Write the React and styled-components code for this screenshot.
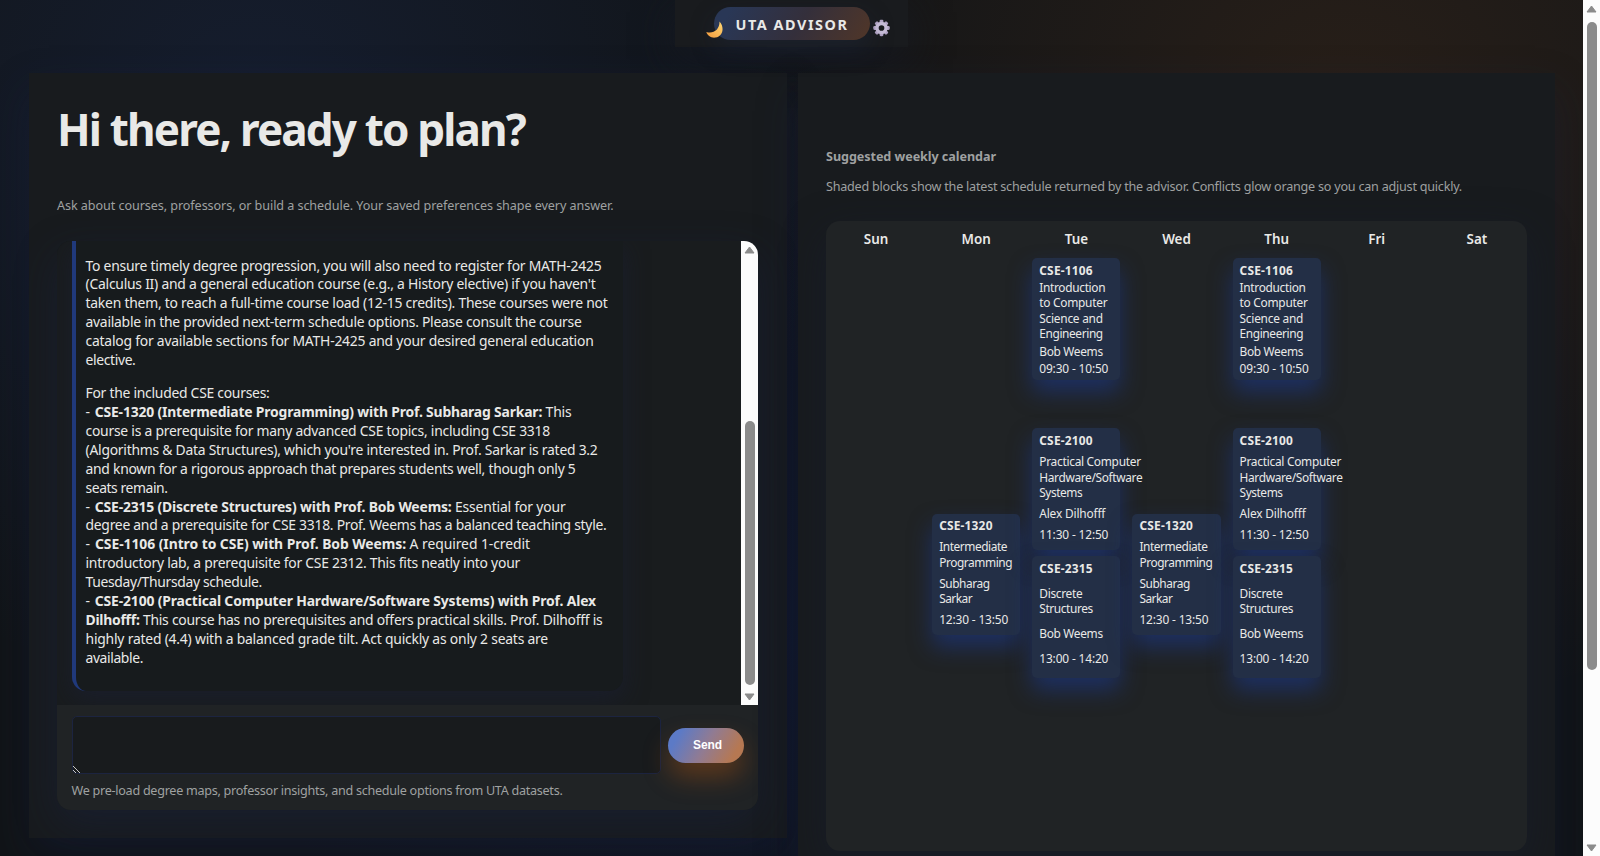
import React, { useLayoutEffect, useRef } from 'react';
import styled, { createGlobalStyle } from 'styled-components';

const GlobalStyle = createGlobalStyle`
  * {
    box-sizing: border-box;
  }
  body {
    margin: 0;
    height: 856px;
    overflow: hidden;
    color: #e9e9e7;
    font-family: 'Segoe UI', 'Noto Sans', 'Open Sans', sans-serif;
    font-size: 14px;
    background: #111417;
  }
  h1, p {
    margin: 0;
  }
`
const Page = styled.div`
    display: flex;
    height: 856px;
    overflow: hidden;
    background:
      radial-gradient(circle at 84% 14%, rgba(245, 128, 37, 0.1), transparent 40%),
      radial-gradient(circle at 16% 14%, rgba(40, 70, 150, 0.19), transparent 38%),
      radial-gradient(ellipse at 50% 75%, rgba(20, 45, 140, 0.13), transparent 50%),
      #111417;
`
const Content = styled.div`
    flex: 1;
    display: flex;
    flex-direction: column;
    align-items: center;
`
const Header = styled.header`
    flex: none;
    display: flex;
    align-items: center;
    gap: 3px;
    width: 233px;
    height: 47px;
    padding: 0 18px 0 30px;
    background: #191b1e;
    box-shadow: 0 12px 40px rgba(24, 27, 36, 0.85);
`
const Brand = styled.div`
    position: relative;
    display: flex;
    align-items: center;
    justify-content: center;
    width: 156px;
    height: 33px;
    margin: 0 0 0 9px;
    padding-top: 2px;
    flex: none;
    border-radius: 17px;
    background: linear-gradient(120deg, #293756 10%, #342f3b 55%, #503628);
    box-shadow: 0 10px 24px rgba(32, 42, 70, 0.35);
    font-size: 14.4px;
    font-weight: 700;
`
const Moon = styled.svg`
    position: absolute;
    left: -8px;
    top: 14px;
`
const Gear = styled.svg`
    margin-top: 9px;
`
const Panels = styled.main`
    flex: none;
    display: grid;
    grid-template-columns: 758px 757px;
    gap: 11px;
    margin-top: 26px;
    align-self: flex-start;
    padding-left: 29px;
`
const Panel = styled.section`
    display: flex;
    flex-direction: column;
    height: ${p => p.$height}px;
    padding: ${p => p.$pad};
    background: #181b1e;
    box-shadow: 0 18px 40px rgba(22, 33, 70, 0.3);
`
const Title = styled.h1`
    font-size: 44px;
    line-height: 60px;
    font-weight: 700;
`
const Muted = styled.p`
    font-size: 12.6px;
    line-height: 18px;
    font-weight: ${p => p.$bold ? 700 : 400};
    color: #9fa1a1;
    margin-top: ${p => p.$top || 0}px;
`
const Chat = styled.div`
    display: flex;
    flex-direction: column;
    width: 701px;
    height: 569px;
    margin-top: 26px;
    border-radius: 14px;
    overflow: hidden;
    box-shadow: 0 14px 40px rgba(24, 34, 70, 0.4);
`
const Log = styled.div`
    display: flex;
    justify-content: space-between;
    height: 464px;
    padding-left: 14.5px;
    background: #191c1e;
`
const Message = styled.div`
    width: 551px;
    height: 450px;
    padding: 15.5px 10px 0;
    border-left: 4px solid #20397b;
    border-bottom-left-radius: 14px;
    border-bottom-right-radius: 14px;
    background: #171b1d;
    box-shadow: 0 8px 24px rgba(26, 32, 54, 0.6);
`
const Paragraph = styled.p`
    font-size: 13.9px;
    line-height: 18.9px;
    margin-bottom: 14.2px;
`
const Strong = styled.strong`
    padding-left: ${p => p.$dashed ? 1.5 : 0}px;
`
const FitText = styled.span`
    display: block;
    width: max-content;
    white-space: pre;
`
const Composer = styled.div`
    height: 105px;
    padding: 11px 14px 0 14.5px;
    background: #202325;
`
const InputRow = styled.div`
    display: flex;
    align-items: center;
    gap: 7px;
`
const Input = styled.div`
    display: flex;
    align-items: flex-end;
    width: 590px;
    height: 58px;
    border: 1px solid #1c2440;
    border-radius: 5px;
    background: #181b1d;
`
const Send = styled.button`
    display: flex;
    align-items: center;
    justify-content: center;
    width: 76px;
    height: 35px;
    padding: 0 0 0 3px;
    border: 0;
    border-radius: 18px;
    color: #fff;
    font: 700 12px 'Liberation Sans', Arial, sans-serif;
    background: linear-gradient(120deg, #5c7ac6 15%, #917b92 50%, #b67852 85%);
    box-shadow: 0 14px 26px rgba(200, 95, 15, 0.36);
`
const Track = styled.div`
    flex: none;
    display: flex;
    flex-direction: column;
    align-items: center;
    width: 17px;
    height: ${p => p.$height}px;
    padding: 5px 0 4px;
    background: #fcfcfc;
`
const Thumb = styled.div`
    width: 10px;
    height: ${p => p.$height}px;
    margin: ${p => p.$top}px 0 auto;
    border-radius: 5px;
    background: #8b8b8b;
`
const Calendar = styled.div`
    display: grid;
    grid-template-columns: repeat(7, minmax(0, 1fr));
    grid-template-rows: 34px repeat(14, 42.6px);
    width: 701px;
    height: 630px;
    margin-top: 25px;
    border-radius: 14px;
    background: #202325;
    box-shadow: 0 14px 40px rgba(24, 30, 50, 0.5);
`
const Day = styled.div`
    padding-top: 9px;
    text-align: center;
    font-size: 13.4px;
    line-height: 18px;
    font-weight: 600;
`
const Course = styled.div`
    display: grid;
    gap: 1.6px;
    grid-column: ${p => p.$day};
    grid-row: ${p => p.$slot} / span 3;
    margin: 3px 6px;
    padding: 4.5px 7px 3.5px;
    border-radius: 5px;
    background: #232f46;
    box-shadow: 0 12px 22px rgba(28, 56, 140, 0.58);
    font-size: 11.9px;
    line-height: 15.6px;
`
const Code = styled.div`
    font-weight: 700;
`

// Spreads the letters of one line so that it takes the given width
const Fit = ({ w, children }) => {
  const ref = useRef(null)
  useLayoutEffect(() => {
    const el = ref.current
    el.style.letterSpacing = '0px'
    const gap = (w - el.getBoundingClientRect().width) / el.textContent.length
    el.style.letterSpacing = `${gap}px`
  }, [w])
  return <FitText ref={ref}>{children}</FitText>
}

const Scrollbar = ({ height, top, thumb }) => (
  <Track $height={height}>
    <svg width="11" height="8" viewBox="0 0 11 8"><path d="M5.5 1 10 7H1Z" fill="#8b8b8b" stroke="#8b8b8b" strokeLinejoin="round" /></svg>
    <Thumb $height={thumb} $top={top} />
    <svg width="11" height="8" viewBox="0 0 11 8"><path d="M5.5 7 10 1H1Z" fill="#8b8b8b" stroke="#8b8b8b" strokeLinejoin="round" /></svg>
  </Track>
);

const intro = [
  [516, 'To ensure timely degree progression, you will also need to register for MATH-2425'],
  [510, "(Calculus II) and a general education course (e.g., a History elective) if you haven't"],
  [522, 'taken them, to reach a full-time course load (12-15 credits). These courses were not'],
  [496, 'available in the provided next-term schedule options. Please consult the course'],
  [508, 'catalog for available sections for MATH-2425 and your desired general education'],
  [50, 'elective.'],
]
const details = [
  [184, '', 'For the included CSE courses:'],
  [486, 'CSE-1320 (Intermediate Programming) with Prof. Subharag Sarkar:', ' This', '- '],
  [464.5, '', "course is a prerequisite for many advanced CSE topics, including CSE 3318"],
  [512, '', "(Algorithms & Data Structures), which you're interested in. Prof. Sarkar is rated 3.2"],
  [490, '', 'and known for a rigorous approach that prepares students well, though only 5'],
  [82, '', 'seats remain.'],
  [480, 'CSE-2315 (Discrete Structures) with Prof. Bob Weems:', ' Essential for your', '- '],
  [521, '', 'degree and a prerequisite for CSE 3318. Prof. Weems has a balanced teaching style.'],
  [444.5, 'CSE-1106 (Intro to CSE) with Prof. Bob Weems:', ' A required 1-credit', '- '],
  [434.5, '', 'introductory lab, a prerequisite for CSE 2312. This fits neatly into your'],
  [176.5, '', 'Tuesday/Thursday schedule.'],
  [510.5, 'CSE-2100 (Practical Computer Hardware/Software Systems) with Prof. Alex', '', '- '],
  [517, 'Dilhofff:', ' This course has no prerequisites and offers practical skills. Prof. Dilhofff is'],
  [462.5, '', 'highly rated (4.4) with a balanced grade tilt. Act quickly as only 2 seats are'],
  [57.5, '', 'available.'],
]
const days = ['Sun', 'Mon', 'Tue', 'Wed', 'Thu', 'Fri', 'Sat']

const cse1106 = { code: 'CSE-1106', slot: 2, name: [['Introduction', 66], ['to Computer', 68], ['Science and', 63.5], ['Engineering', 63.5]], prof: [['Bob Weems', 63.5]], time: '09:30 - 10:50' }
const cse2100 = { code: 'CSE-2100', slot: 6, name: [['Practical Computer', 101.5], ['Hardware/Software', 103], ['Systems', 43]], prof: [['Alex Dilhofff', 66]], time: '11:30 - 12:50' }
const cse1320 = { code: 'CSE-1320', slot: 8, name: [['Intermediate', 68], ['Programming', 73]], prof: [['Subharag', 50.5], ['Sarkar', 33]], time: '12:30 - 13:50' }
const cse2315 = { code: 'CSE-2315', slot: 9, name: [['Discrete', 43], ['Structures', 53.5]], prof: [['Bob Weems', 63.5]], time: '13:00 - 14:20' }

const schedule = [
  { day: 2, ...cse1320 },
  { day: 3, ...cse1106 },
  { day: 3, ...cse2100 },
  { day: 3, ...cse2315 },
  { day: 4, ...cse1320 },
  { day: 5, ...cse1106 },
  { day: 5, ...cse2100 },
  { day: 5, ...cse2315 },
]

const CourseBlock = ({ course }) => {
  const { day, slot, code, name, prof, time } = course
  return (
    <Course $day={day} $slot={slot}>
      <Code><Fit w={53.5}>{code}</Fit></Code>
      <div>{name.map(([text, w]) => <Fit key={text} w={w}>{text}</Fit>)}</div>
      <div>{prof.map(([text, w]) => <Fit key={text} w={w}>{text}</Fit>)}</div>
      <Fit w={69}>{time}</Fit>
    </Course>
  )
}

const App = () => (
  <React.Fragment>
    <GlobalStyle />
    <Page>
      <Content>
        <Header>
          <Brand>
            <Fit w={113}>UTA ADVISOR</Fit>
            <Moon width="18" height="18" viewBox="0 0 18 18">
              <defs>
                <linearGradient id="moon" x1="0" y1="1" x2="1" y2="0">
                  <stop offset="0" stopColor="#f39a3c" />
                  <stop offset="1" stopColor="#ffd773" />
                </linearGradient>
              </defs>
              <path d="M13.5 0.5C18.5 5.5 17.5 15.5 9.5 16.6C5 17.2 1.5 14.5 0.3 11C7.5 13.3 13.8 8.5 13.5 0.5Z" fill="url(#moon)" />
            </Moon>
          </Brand>
          <Gear width="18" height="18" viewBox="0 0 18 18">
            <g fill="#b3a5c6">
              {[0, 45, 90, 135, 180, 225, 270, 315].map(a => (
                <rect key={a} x="7" y="0.3" width="4" height="4" rx="1.2" transform={`rotate(${a} 9 9)`} />
              ))}
            </g>
            <circle cx="9" cy="9" r="4.8" fill="none" stroke="#cabfda" strokeWidth="3.6" />
          </Gear>
        </Header>
        <Panels>
          <Panel $height={765} $pad="26px 28px 0">
            <Title><Fit w={468}>Hi there, ready to plan?</Fit></Title>
            <Muted $top={38}><Fit w={556.5}>Ask about courses, professors, or build a schedule. Your saved preferences shape every answer.</Fit></Muted>
            <Chat>
              <Log>
                <Message>
                  <Paragraph>
                    {intro.map(([w, text]) => <Fit key={text} w={w}>{text}</Fit>)}
                  </Paragraph>
                  <Paragraph>
                    {details.map(([w, strong, text, dash]) => (
                      <Fit key={strong + text} w={w}>{dash}{strong && <Strong $dashed={!!dash}>{strong}</Strong>}{text}</Fit>
                    ))}
                  </Paragraph>
                </Message>
                <Scrollbar height={464} top={167} thumb={264} />
              </Log>
              <Composer>
                <InputRow>
                  <Input>
                    <svg width="8" height="8" viewBox="0 0 8 8"><path d="M0 1 7 8M0 5 3 8" stroke="#c8c8c8" /></svg>
                  </Input>
                  <Send><Fit w={29}>Send</Fit></Send>
                </InputRow>
                <Muted $top={8}><Fit w={491}>We pre-load degree maps, professor insights, and schedule options from UTA datasets.</Fit></Muted>
              </Composer>
            </Chat>
          </Panel>
          <Panel $height={820} $pad="75px 28px 0">
            <Muted $bold><Fit w={170}>Suggested weekly calendar</Fit></Muted>
            <Muted $top={12}><Fit w={636}>Shaded blocks show the latest schedule returned by the advisor. Conflicts glow orange so you can adjust quickly.</Fit></Muted>
            <Calendar>
              {days.map(day => <Day key={day}>{day}</Day>)}
              {schedule.map(course => <CourseBlock key={course.code + course.day} course={course} />)}
            </Calendar>
          </Panel>
        </Panels>
      </Content>
      <Scrollbar height={856} top={9} thumb={648} />
    </Page>
  </React.Fragment>
);

export default App;
